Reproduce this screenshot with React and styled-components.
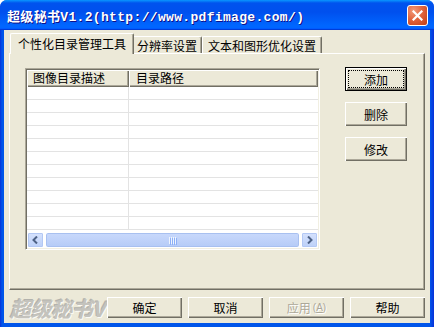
import React from 'react';
import styled, { createGlobalStyle } from 'styled-components';

const GlobalStyle = createGlobalStyle`
  html, body {
    margin: 0;
    padding: 0;
    background: #fff;
  }
  * {
    box-sizing: border-box;
  }
`;

const CJK = `"Noto Sans CJK SC", "Liberation Sans", sans-serif`;

export default function App() {
    const rows = Array.from({ length: 11 });

    return (
        <>
            <GlobalStyle />
            <Window>
                <TitleBar>
                    <Title>超级秘书V1.2(http://www.pdfimage.com/)</Title>
                    <CloseButton>
                        <svg width="11" height="11" viewBox="0 0 11 11">
                            <path d="M1.5 1.5 L9.5 9.5 M9.5 1.5 L1.5 9.5" stroke="#fff" strokeWidth="2.2" strokeLinecap="square" />
                        </svg>
                    </CloseButton>
                </TitleBar>
                <Client>
                    <TabStrip>
                        <Tab active>个性化目录管理工具</Tab>
                        <Tab pad={4}>分辨率设置</Tab>
                        <Tab pad={5}>文本和图形优化设置</Tab>
                    </TabStrip>
                    <Panel>
                        <ListBox>
                            <Header>
                                <HeaderCell width={102}>图像目录描述</HeaderCell>
                                <HeaderCell grow>目录路径</HeaderCell>
                            </Header>
                            <Body>
                                {rows.map((_, i) => (
                                    <Row key={i}>
                                        <Cell width={102} />
                                        <Cell grow />
                                    </Row>
                                ))}
                            </Body>
                            <ScrollBar>
                                <ArrowButton>
                                    <svg width="7" height="8" viewBox="0 0 7 8">
                                        <path d="M5 0.5 L1.5 4 L5 7.5" stroke="#4d6185" strokeWidth="2" fill="none" />
                                    </svg>
                                </ArrowButton>
                                <Thumb>
                                    <Grip>
                                        <span /><span /><span /><span />
                                    </Grip>
                                </Thumb>
                                <ArrowButton>
                                    <svg width="7" height="8" viewBox="0 0 7 8">
                                        <path d="M2 0.5 L5.5 4 L2 7.5" stroke="#4d6185" strokeWidth="2" fill="none" />
                                    </svg>
                                </ArrowButton>
                            </ScrollBar>
                        </ListBox>
                        <SideButtons>
                            <Button small isDefault>
                                <Focus>添加</Focus>
                            </Button>
                            <Button small>删除</Button>
                            <Button small>修改</Button>
                        </SideButtons>
                    </Panel>
                    <Footer>
                        <Brand>超级秘书V</Brand>
                        <FooterButtons>
                            <Button>确定</Button>
                            <Button>取消</Button>
                            <Button disabled>
                                应用<Mnemonic>(<u>A</u>)</Mnemonic>
                            </Button>
                            <Button>帮助</Button>
                        </FooterButtons>
                    </Footer>
                </Client>
            </Window>
        </>
    );
}

const Window = styled.div`
  width: 434px;
  height: 327px;
  display: flex;
  flex-direction: column;
  background: linear-gradient(to right, #0831d9 0px, #0055ea 2px, #0055ea 430px, #0831d9 434px);
  border-radius: 7px 7px 0 0;
  overflow: hidden;
`;

const TitleBar = styled.div`
  height: 30px;
  flex: none;
  display: flex;
  align-items: center;
  justify-content: space-between;
  padding: 0 6px 0 7px;
  background: linear-gradient(
    to bottom,
    #0997ff 0%,
    #0053ee 10%,
    #0050ee 40%,
    #0066ff 85%,
    #0066ff 92%,
    #005bff 95%,
    #003dd7 97%,
    #003dd7 100%
  );
`;

const Title = styled.div`
  font-family: "Liberation Mono", "Noto Sans CJK SC", monospace;
  font-weight: bold;
  font-size: 13px;
  color: #fff;
  text-shadow: 1px 1px 0 #0f1089;
  white-space: nowrap;
  letter-spacing: 0.33px;
`;

const CloseButton = styled.div`
  width: 21px;
  height: 21px;
  border: 1px solid #fff;
  border-radius: 3px;
  display: flex;
  align-items: center;
  justify-content: center;
  background: radial-gradient(circle at 30% 25%, #f29a7a 0%, #e1653f 45%, #c13d14 100%);
`;

const Client = styled.div`
  flex: 1;
  margin: 0 4px 4px;
  padding: 3px 5px 0;
  background: #ece9d8;
  display: flex;
  flex-direction: column;
`;

const TabStrip = styled.div`
  height: 20px;
  display: flex;
  align-items: flex-end;
  padding-left: 3px;
  position: relative;
  z-index: 2;
`;

const Tab = styled.div`
  font-family: ${CJK};
  font-size: 12px;
  line-height: 14px;
  color: #000;
  background: #ece9d8;
  white-space: nowrap;
  border-top: 1px solid #fff;
  border-left: 1px solid #fff;
  border-right: 1px solid #716f64;
  box-shadow: inset -1px 0 0 #aca899;
  border-radius: 2px 2px 0 0;
  height: ${p => (p.active ? '21px' : '17px')};
  padding: ${p => (p.active ? '3px 7px 0' : `2px ${p.pad}px 0`)};
  margin: ${p => (p.active ? '0 -2px -1px -2px' : '0')};
  position: relative;
  z-index: ${p => (p.active ? 2 : 1)};
`;

const Panel = styled.div`
  height: 237px;
  flex: none;
  display: flex;
  align-items: flex-start;
  padding: 14px 0 0 15px;
  border-top: 1px solid #fff;
  border-left: 1px solid #fff;
  border-right: 1px solid #716f64;
  border-bottom: 1px solid #716f64;
  box-shadow: inset -1px -1px 0 #aca899;
`;

const ListBox = styled.div`
  width: 295px;
  height: 182px;
  display: flex;
  flex-direction: column;
  background: #fff;
  border-top: 1px solid #aca899;
  border-left: 1px solid #aca899;
  border-right: 1px solid #fff;
  border-bottom: 1px solid #fff;
  box-shadow: inset 1px 1px 0 #716f64, inset -1px -1px 0 #f1efe2;
  padding: 1px;
  overflow: hidden;
`;

const Header = styled.div`
  height: 17px;
  flex: none;
  display: flex;
`;

const HeaderCell = styled.div`
  width: ${p => (p.width ? `${p.width}px` : 'auto')};
  flex: ${p => (p.grow ? 1 : 'none')};
  font-family: ${CJK};
  font-size: 12px;
  line-height: 15px;
  color: #000;
  padding-left: ${p => (p.grow ? 7 : 6)}px;
  background: #ece9d8;
  box-shadow: inset 1px 1px 0 #fff, inset -1px -1px 0 #716f64, inset -2px -2px 0 #aca899;
`;

const Body = styled.div`
  flex: 1;
  overflow: hidden;
  background: #fff;
`;

const Row = styled.div`
  height: 13px;
  display: flex;
  border-bottom: 1px solid #e3e3e3;
`;

const Cell = styled.div`
  width: ${p => (p.width ? `${p.width}px` : 'auto')};
  flex: ${p => (p.grow ? 1 : 'none')};
  border-right: ${p => (p.grow ? 'none' : '1px solid #e3e3e3')};
`;

const ScrollBar = styled.div`
  height: 16px;
  flex: none;
  display: flex;
  gap: 1px;
  background: #fefefe;
`;

const ArrowButton = styled.div`
  width: 17px;
  height: 16px;
  flex: none;
  display: flex;
  align-items: center;
  justify-content: center;
  border: 1px solid #fff;
  border-radius: 2px;
  background: linear-gradient(to bottom, #d6e2fd, #bcd0f8);
  box-shadow: inset 0 0 0 1px #b3c8f4;
`;

const Thumb = styled.div`
  flex: 1;
  height: 16px;
  display: flex;
  align-items: center;
  justify-content: center;
  border: 1px solid #fff;
  border-radius: 3px;
  background: linear-gradient(to bottom, #c9d9fc, #b5cbf7);
  box-shadow: inset 0 0 0 1px #a8c0f0;
`;

const Grip = styled.div`
  display: flex;
  gap: 1px;
  span {
    display: block;
    width: 1px;
    height: 7px;
    background: #eef4fe;
    box-shadow: 1px 1px 0 #8cb0f8;
  }
`;

const SideButtons = styled.div`
  display: flex;
  flex-direction: column;
  gap: 11px;
  margin: -1px 0 0 25px;
`;

const Button = styled.div`
  width: ${p => (p.small ? '62px' : '75px')};
  height: ${p => (p.small ? '24px' : '21px')};
  display: flex;
  align-items: center;
  justify-content: center;
  font-family: ${CJK};
  font-size: 12px;
  color: ${p => (p.disabled ? '#aca899' : '#000')};
  text-shadow: ${p => (p.disabled ? '1px 1px 0 #fff' : 'none')};
  background: #ece9d8;
  border: ${p => (p.isDefault ? '1px solid #000' : 'none')};
  box-shadow: inset 1px 1px 0 #fff, inset -1px -1px 0 #716f64, inset -2px -2px 0 #aca899;
  padding: 2px;
`;

const Focus = styled.div`
  width: 100%;
  height: 100%;
  display: flex;
  align-items: center;
  justify-content: center;
  border: 1px dotted #000;
`;

const Mnemonic = styled.span`
  font-family: "Liberation Sans", sans-serif;
  font-size: 10px;
  margin-left: 2px;
`;

const Footer = styled.div`
  flex: 1;
  display: flex;
  align-items: flex-start;
  justify-content: space-between;
  padding: 7px 0 0 1px;
`;

const Brand = styled.div`
  font-family: ${CJK};
  font-size: 21px;
  line-height: 22px;
  font-weight: bold;
  font-style: italic;
  color: #c4c3bd;
  text-shadow: 1px 1px 0 #fbfaf5, -1px -1px 0 #b3b2ac;
  letter-spacing: -0.5px;
  white-space: nowrap;
`;

const FooterButtons = styled.div`
  display: flex;
  gap: 6px;
`;
